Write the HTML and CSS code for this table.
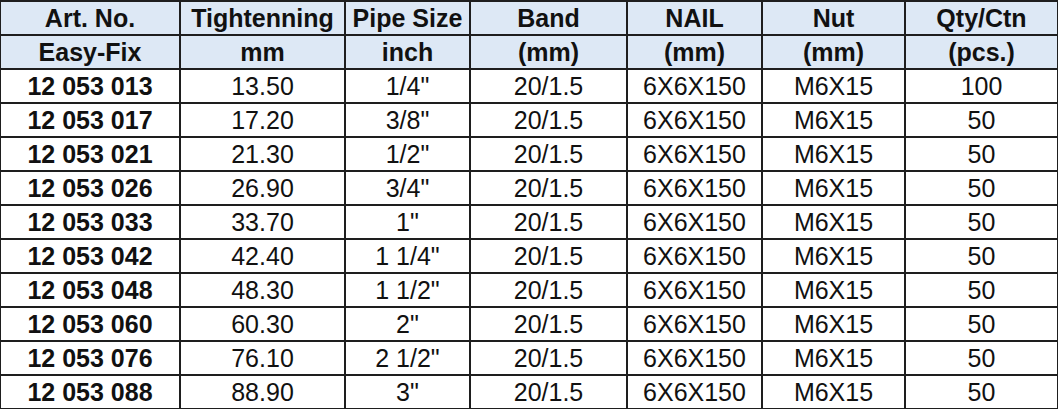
FILE: index.html
```html
<!DOCTYPE html>
<html>
<head>
<meta charset="utf-8">
<link rel="stylesheet" href="styles.css">
</head>
<body>
<div class="table">
  <div class="cell head">Art. No.</div>
  <div class="cell head">Tightenning</div>
  <div class="cell head">Pipe Size</div>
  <div class="cell head">Band</div>
  <div class="cell head">NAIL</div>
  <div class="cell head">Nut</div>
  <div class="cell head">Qty/Ctn</div>

  <div class="cell head">Easy-Fix</div>
  <div class="cell head">mm</div>
  <div class="cell head">inch</div>
  <div class="cell head">(mm)</div>
  <div class="cell head">(mm)</div>
  <div class="cell head">(mm)</div>
  <div class="cell head">(pcs.)</div>

  <div class="cell art">12 053 013</div><div class="cell">13.50</div><div class="cell">1/4"</div><div class="cell">20/1.5</div><div class="cell">6X6X150</div><div class="cell">M6X15</div><div class="cell">100</div>
  <div class="cell art">12 053 017</div><div class="cell">17.20</div><div class="cell">3/8"</div><div class="cell">20/1.5</div><div class="cell">6X6X150</div><div class="cell">M6X15</div><div class="cell">50</div>
  <div class="cell art">12 053 021</div><div class="cell">21.30</div><div class="cell">1/2"</div><div class="cell">20/1.5</div><div class="cell">6X6X150</div><div class="cell">M6X15</div><div class="cell">50</div>
  <div class="cell art">12 053 026</div><div class="cell">26.90</div><div class="cell">3/4"</div><div class="cell">20/1.5</div><div class="cell">6X6X150</div><div class="cell">M6X15</div><div class="cell">50</div>
  <div class="cell art">12 053 033</div><div class="cell">33.70</div><div class="cell">1"</div><div class="cell">20/1.5</div><div class="cell">6X6X150</div><div class="cell">M6X15</div><div class="cell">50</div>
  <div class="cell art">12 053 042</div><div class="cell">42.40</div><div class="cell">1 1/4"</div><div class="cell">20/1.5</div><div class="cell">6X6X150</div><div class="cell">M6X15</div><div class="cell">50</div>
  <div class="cell art">12 053 048</div><div class="cell">48.30</div><div class="cell">1 1/2"</div><div class="cell">20/1.5</div><div class="cell">6X6X150</div><div class="cell">M6X15</div><div class="cell">50</div>
  <div class="cell art">12 053 060</div><div class="cell">60.30</div><div class="cell">2"</div><div class="cell">20/1.5</div><div class="cell">6X6X150</div><div class="cell">M6X15</div><div class="cell">50</div>
  <div class="cell art">12 053 076</div><div class="cell">76.10</div><div class="cell">2 1/2"</div><div class="cell">20/1.5</div><div class="cell">6X6X150</div><div class="cell">M6X15</div><div class="cell">50</div>
  <div class="cell art">12 053 088</div><div class="cell">88.90</div><div class="cell">3"</div><div class="cell">20/1.5</div><div class="cell">6X6X150</div><div class="cell">M6X15</div><div class="cell">50</div>
</div>
</body>
</html>
```
FILE: styles.css
```css
html, body {
  margin: 0;
  padding: 0;
  background: #ffffff;
}

.table {
  display: grid;
  grid-template-columns: 178px 163px 123px 155px 133px 141px 151px;
  grid-auto-rows: 32px;
  gap: 2px;
  width: max-content;
  padding: 2px 1px 1px 1px;
  background: #1e1e1e;
  font-family: "Liberation Sans", Arial, sans-serif;
  font-size: 25px;
  color: #111111;
}

.cell {
  background: #ffffff;
  display: flex;
  align-items: center;
  justify-content: center;
  white-space: nowrap;
  line-height: 1;
  padding-top: 1px;
}

.head {
  background: #dde8f5;
  font-weight: bold;
}

.art {
  font-weight: bold;
}
```
